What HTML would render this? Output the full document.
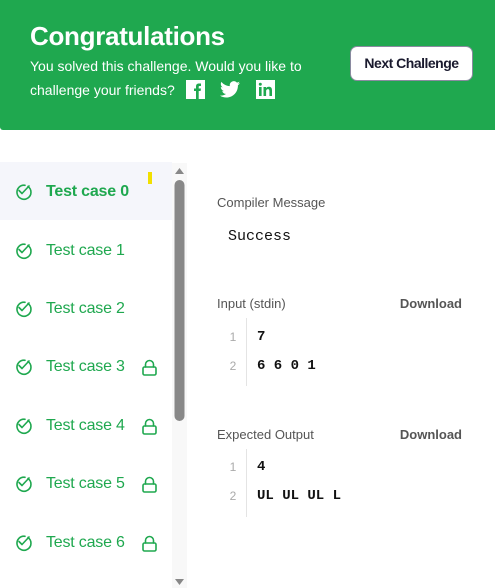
<!DOCTYPE html>
<html><head><style>
*{margin:0;padding:0;box-sizing:border-box}
body{width:495px;height:588px;overflow:hidden;background:#fff;font-family:"Liberation Sans",sans-serif;position:relative}
.ban{position:absolute;left:0;top:0;width:495px;height:130px;background:#1fa84f;border-bottom-left-radius:3px}
.t{position:absolute;color:#fff}
.btn{position:absolute;left:350px;top:46px;width:123px;height:35px;background:#fff;border:1px solid #8a8aa0;border-radius:7px;font-weight:bold;font-size:14px;color:#1a1a2e;text-align:center;line-height:33px;letter-spacing:-0.5px}
.row{position:absolute;left:0;width:172px;height:58px}
.row .lbl{position:absolute;left:46px;top:30px;transform:translateY(-50%);font-size:16px;color:#1fa84f;letter-spacing:-0.2px}
.g{position:absolute;font-size:13px;color:#555}
.dl{position:absolute;font-size:13px;font-weight:bold;color:#555;right:33px}
.ln{position:absolute;left:228px;font-size:12px;color:#aaa;width:10px;text-align:center}
.cd{position:absolute;left:257px;font-family:"Liberation Mono",monospace;font-weight:bold;font-size:14px;color:#111}
.dv{position:absolute;left:246px;width:1px;background:#e4e4e4}
</style></head><body>
<div class="ban">
<div class="t" style="left:30px;top:21px;font-size:26px;font-weight:bold;letter-spacing:-0.3px">Congratulations</div>
<div class="t" style="left:30px;top:58px;font-size:14px">You solved this challenge. Would you like to</div>
<div class="t" style="left:30px;top:82px;font-size:14px">challenge your friends?</div>
<svg style="position:absolute;left:186px;top:80px" width="19" height="19" viewBox="0 0 19 19"><rect width="19" height="19" fill="#fff"/><path d="M10 19V11H8V8.5H10V6.5C10 4.5 11 3.5 13 3.5H15V6H13.5C12.8 6 12.7 6.4 12.7 7V8.5H15L14.6 11H12.7V19Z" fill="#1fa84f"/></svg>
<svg style="position:absolute;left:220px;top:81px" width="20" height="17" viewBox="0 0 24 20"><path d="M24 2.4c-.9.4-1.8.7-2.8.8 1-.6 1.8-1.6 2.2-2.700-1 .6-2 1-3.1 1.2C19.3.7 18 0 16.6 0c-2.7 0-4.9 2.2-4.9 4.9 0 .4 0 .8.1 1.1C7.7 5.8 4.1 3.9 1.7.9c-.4.7-.7 1.6-.7 2.5 0 1.7.9 3.2 2.2 4.1-.8 0-1.6-.2-2.2-.6v.1c0 2.4 1.7 4.4 3.900 4.8-.4.1-.8.2-1.3.2-.3 0-.6 0-.9-.1.6 2 2.4 3.4 4.6 3.4-1.7 1.3-3.8 2.1-6.1 2.1-.4 0-.8 0-1.2-.1C2.2 18.8 4.8 19.6 7.5 19.6c9.1 0 14-7.5 14-14v-.6c1-.7 1.8-1.6 2.5-2.6z" fill="#fff"/></svg>
<svg style="position:absolute;left:256px;top:80px" width="19" height="19" viewBox="0 0 19 19"><rect width="19" height="19" fill="#fff"/><rect x="3" y="7" width="2.6" height="9" fill="#1fa84f"/><circle cx="4.3" cy="4.3" r="1.5" fill="#1fa84f"/><path d="M7.5 7H10V8.3C10.5 7.4 11.5 6.8 12.8 6.8 15 6.8 16 8 16 10.5V16H13.4V11C13.4 9.8 13 9.1 12 9.1 11 9.1 10.1 9.8 10.1 11V16H7.5Z" fill="#1fa84f"/></svg>
<div class="btn">Next Challenge</div>
</div>

<div class="row" style="top:162px;background:#f5f6fb"><div class="lbl" style="font-weight:bold">Test case 0</div></div>
<div style="position:absolute;left:148px;top:172px;width:4px;height:12px;background:#f2e000"></div>
<div class="row" style="top:221px"><div class="lbl">Test case 1</div></div>
<div class="row" style="top:279px"><div class="lbl">Test case 2</div></div>
<div class="row" style="top:337px"><div class="lbl">Test case 3</div></div>
<div class="row" style="top:396px"><div class="lbl">Test case 4</div></div>
<div class="row" style="top:454px"><div class="lbl">Test case 5</div></div>
<div class="row" style="top:513px"><div class="lbl">Test case 6</div></div>

<svg style="position:absolute;left:0;top:0" width="172" height="588">
<g fill="none" stroke="#1fa84f" stroke-width="1.6" stroke-linecap="round" stroke-linejoin="round">
<g id="c"><path d="M28 186.5A7 7 0 1 1 25 185.3"/><path d="M19 190.5l3 3 7-7.5"/></g>
<use href="#c" y="59"/><use href="#c" y="117"/><use href="#c" y="175"/><use href="#c" y="234"/><use href="#c" y="292"/><use href="#c" y="351"/>
<g id="l"><rect x="143" y="367" width="13" height="8" rx="1.5"/><path d="M145.5 367v-2.5a4 4 0 0 1 8 0V367"/></g>
<use href="#l" y="59"/><use href="#l" y="117"/><use href="#l" y="176"/>
</g></svg>

<div style="position:absolute;left:172px;top:163px;width:15px;height:425px;background:#f8f8f8"></div>
<svg style="position:absolute;left:172px;top:163px" width="15" height="425"><path d="M3 11L7.5 5 12 11Z" fill="#888"/><rect x="2.5" y="17" width="10" height="241" rx="5" fill="#888"/><path d="M3 416L7.5 422 12 416Z" fill="#888"/></svg>

<div class="g" style="left:217px;top:195px">Compiler Message</div>
<div style="position:absolute;left:228px;top:228px;font-family:'Liberation Mono',monospace;font-size:15px;color:#111">Success</div>

<div class="g" style="left:217px;top:296px">Input (stdin)</div>
<div class="dl" style="top:296px">Download</div>
<div class="dv" style="top:318px;height:68px"></div>
<div class="ln" style="top:330px">1</div><div class="cd" style="top:329px">7</div>
<div class="ln" style="top:359px">2</div><div class="cd" style="top:358px">6 6 0 1</div>

<div class="g" style="left:217px;top:427px">Expected Output</div>
<div class="dl" style="top:427px">Download</div>
<div class="dv" style="top:449px;height:68px"></div>
<div class="ln" style="top:460px">1</div><div class="cd" style="top:459px">4</div>
<div class="ln" style="top:489px">2</div><div class="cd" style="top:488px">UL UL UL L</div>
</body></html>
